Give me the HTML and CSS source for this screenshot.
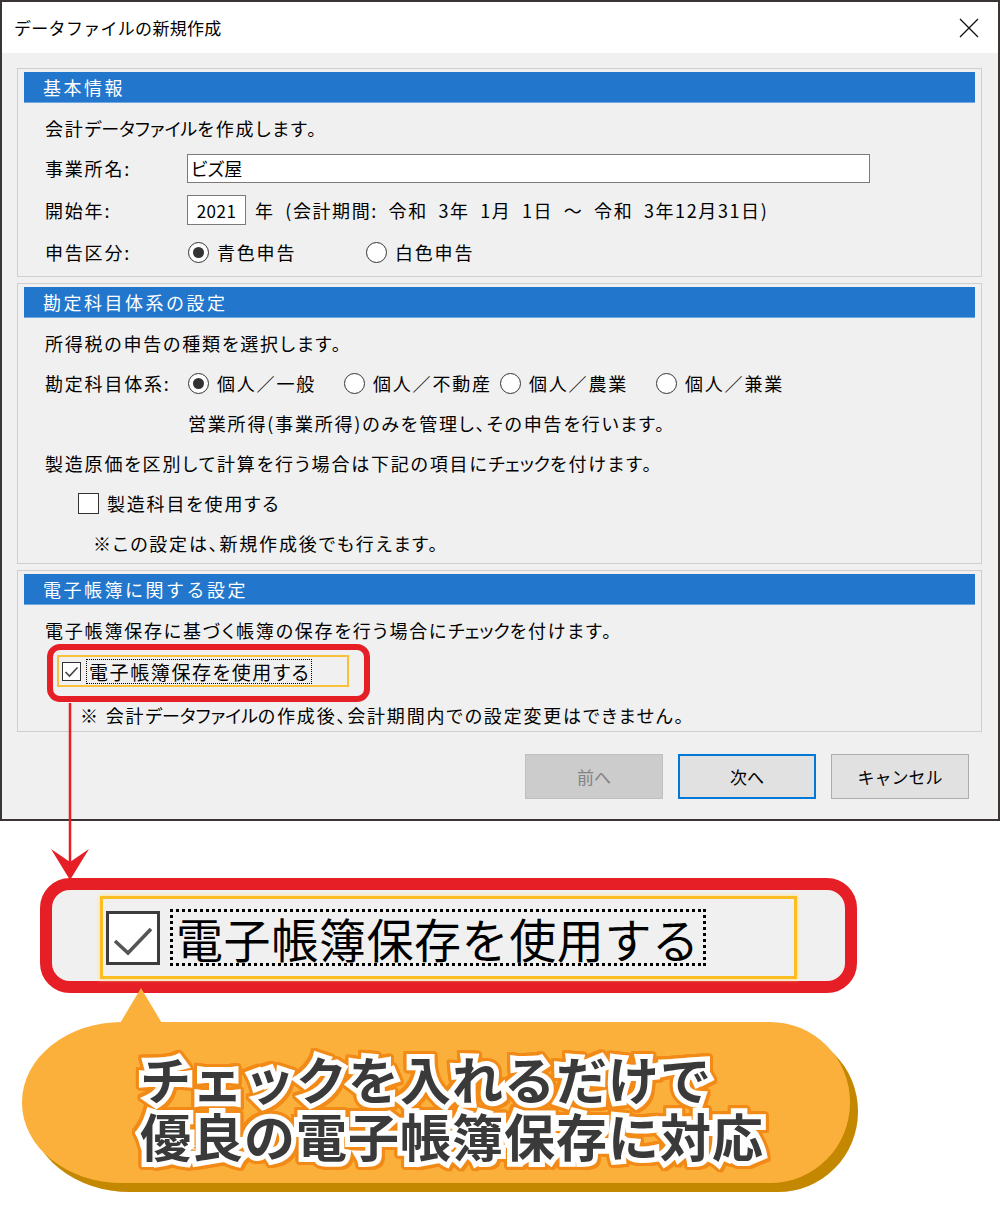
FILE: index.html
```html
<!DOCTYPE html>
<html lang="ja">
<head>
    <meta charset="UTF-8">
    <meta name="viewport" content="width=device-width, initial-scale=1.0">
    <title>データファイルの新規作成</title>
    <link rel="stylesheet" href="styles.css">
</head>

<body>
    <div class="window">
        <div class="titlebar">
            <span class="title">データファイルの新規作成</span>
            <svg class="close" width="20" height="20" viewBox="0 0 20 20">
                <path d="M1 1 L19 19 M19 1 L1 19" stroke="#111" stroke-width="1.3" fill="none" />
            </svg>
        </div>

        <div class="content">
            <!-- 基本情報 -->
            <section class="group">
                <h2 class="group-head">基本情報</h2>
                <div class="group-body basic">
                    <div class="row">会計<span class="kt">データファイル</span>を作成します。</div>
                    <div class="row">
                        <span class="label">事業所名:</span>
                        <div class="field field-name">ビズ屋</div>
                    </div>
                    <div class="row row-tall">
                        <span class="label">開始年:</span>
                        <div class="field field-year">2021</div>
                        <span class="period">年 (会計期間: 令和 3年 1月 1日 ～ 令和 3年12月31日)</span>
                    </div>
                    <div class="row">
                        <span class="label">申告区分:</span>
                        <span class="option option-wide"><span class="radio checked"></span>青色申告</span>
                        <span class="option"><span class="radio"></span>白色申告</span>
                    </div>
                </div>
            </section>

            <!-- 勘定科目体系の設定 -->
            <section class="group">
                <h2 class="group-head">勘定科目体系の設定</h2>
                <div class="group-body accounts">
                    <div class="row">所得税の申告の種類を選択します。</div>
                    <div class="row">
                        <span class="label">勘定科目体系:</span>
                        <span class="option"><span class="radio checked"></span>個人／一般</span>
                        <span class="option"><span class="radio"></span>個人／不動産</span>
                        <span class="option"><span class="radio"></span>個人／農業</span>
                        <span class="option"><span class="radio"></span>個人／兼業</span>
                    </div>
                    <div class="row hint">営業所得(事業所得)のみを管理し、その申告を行います。</div>
                    <div class="row">製造原価を区別して計算を行う場合は下記の項目に<span class="kt">チェック</span>を付けます。</div>
                    <div class="row check-row"><span class="checkbox"></span>製造科目を使用する</div>
                    <div class="row note-indent">※この設定は、新規作成後でも行えます。</div>
                </div>
            </section>

            <!-- 電子帳簿に関する設定 -->
            <section class="group">
                <h2 class="group-head">電子帳簿に関する設定</h2>
                <div class="group-body ledger">
                    <div class="row lead">電子帳簿保存に基づく帳簿の保存を行う場合に<span class="kt">チェック</span>を付けます。</div>
                    <div class="row mark-row">
                        <div class="mark">
                            <div class="mark-inner">
                                <span class="checkbox">
                                    <svg width="17" height="17" viewBox="0 0 17 17">
                                        <path d="M2.5 9 L6.5 13 L14.5 4.5" stroke="#444" stroke-width="1.6" fill="none" />
                                    </svg>
                                </span>
                                <span class="focus-text">電子帳簿保存を使用する</span>
                            </div>
                        </div>
                    </div>
                    <div class="row note-row">※ 会計<span class="kt">データファイル</span>の作成後、会計期間内での設定変更はできません。</div>
                </div>
            </section>

            <div class="actions">
                <button type="button" class="btn btn-disabled">前へ</button>
                <button type="button" class="btn btn-default">次へ</button>
                <button type="button" class="btn">キャンセル</button>
            </div>
        </div>
    </div>

    <!-- connector from the small frame to the enlarged view -->
    <svg class="connector" width="50" height="180" viewBox="0 0 50 180">
        <line x1="25" y1="0" x2="25" y2="165" stroke="#e61f27" stroke-width="2.5" />
        <polygon points="6,146 25,177 44,146 25,159" fill="#e61f27" />
    </svg>

    <div class="zoom-box">
        <div class="zoom-inner">
            <span class="big-check">
                <svg width="48" height="48" viewBox="0 0 48 48">
                    <path d="M6 27 L19 39 L42 15" stroke="#555" stroke-width="3.6" fill="none" />
                </svg>
            </span>
            <span class="big-text">電子帳簿保存を使用する</span>
        </div>
    </div>

    <div class="bubble">
        <p class="bubble-text">チェックを入れるだけで<br>優良の電子帳簿保存に対応</p>
    </div>
</body>
</html>
```

FILE: styles.css
```css
body {
    margin: 0;
    position: relative;
    width: 1000px;
    height: 1209px;
    background-color: #fff;
    font-family: "Noto Sans CJK JP", "Noto Sans", sans-serif;
    color: #000;
}

.window {
    box-sizing: border-box;
    width: 1000px;
    height: 821px;
    border: 2px solid #3b3434;
    background-color: #f0f0f0;
}

.titlebar {
    height: 51px;
    background-color: #fff;
    display: flex;
    align-items: center;
    justify-content: space-between;
    padding: 0 19px 0 12px;
}

.title {
    font-size: 17px;
    letter-spacing: 0.3px;
}

.content {
    padding: 15px 16px 0 15px;
}

.group {
    border: 1px solid #cfcfcf;
    padding: 3px 6px 0;
}

.group + .group {
    margin-top: 6px;
}

.group-head {
    margin: 0;
    height: 31px;
    background-color: #2277cc;
    border-bottom: 1px solid #6fa8e0;
    box-sizing: border-box;
    color: #fff;
    font-size: 18px;
    font-weight: 400;
    line-height: 30px;
    letter-spacing: 2.5px;
    padding-left: 19px;
}

.group-body {
    padding: 5px 0 4px 21px;
    font-size: 18px;
    letter-spacing: 1.8px;
    font-feature-settings: "palt";
}

.group-body.accounts {
    padding-bottom: 0;
}

.group-body.ledger {
    padding-top: 10px;
}

.kt {
    letter-spacing: 0;
}

.row {
    height: 40px;
    display: flex;
    align-items: center;
    white-space: nowrap;
}

.row-tall {
    height: 44px;
}

.label {
    width: 142px;
}

.field {
    box-sizing: border-box;
    height: 30px;
    background-color: #fff;
    border: 1px solid #7a7a7a;
    display: flex;
    align-items: center;
    padding-left: 3px;
}

.field-name {
    width: 683px;
    height: 29px;
    letter-spacing: 0;
}

.field-year {
    width: 59px;
    justify-content: center;
    padding-left: 0;
    font-size: 17px;
    letter-spacing: 0.5px;
}

.period {
    margin-left: 9px;
    letter-spacing: 1.6px;
    word-spacing: 5px;
}

.option {
    display: flex;
    align-items: center;
    width: 156px;
}

.option-wide {
    width: 178px;
}

.radio {
    box-sizing: border-box;
    flex: none;
    width: 21px;
    height: 21px;
    margin: 0 8px 0 1px;
    border: 1.5px solid #333;
    border-radius: 50%;
    background-color: #fff;
    display: flex;
    align-items: center;
    justify-content: center;
}

.radio.checked::after {
    content: "";
    width: 11px;
    height: 11px;
    border-radius: 50%;
    background-color: #333;
}

.hint {
    padding-left: 143px;
}

.checkbox {
    box-sizing: border-box;
    width: 21px;
    height: 21px;
    border: 1px solid #333;
    background-color: #fff;
    display: flex;
}

.check-row .checkbox {
    margin: 0 8px 0 33px;
}

.note-indent {
    padding-left: 48px;
}

.lead {
    height: 29px;
}

.mark-row {
    height: 58px;
    align-items: flex-start;
}

.mark {
    box-sizing: border-box;
    width: 323px;
    height: 58px;
    margin-left: 2px;
    border: 6px solid #e61f27;
    border-radius: 13px;
    padding: 5px 0 0 4px;
}

.mark-inner {
    box-sizing: border-box;
    width: 292px;
    height: 32px;
    border: 2px solid #f9c13a;
    display: flex;
    align-items: center;
    padding-left: 3px;
}

.mark-inner .checkbox {
    width: 19px;
    height: 19px;
}

.focus-text {
    margin-left: 5px;
    border: 1px dotted #000;
    padding: 0 1px 0 2px;
    font-size: 19px;
    letter-spacing: 1.6px;
    line-height: 23px;
}

.note-row {
    height: 25px;
    padding-left: 35px;
}

.actions {
    display: flex;
    justify-content: flex-end;
    gap: 15px;
    margin-top: 22px;
    padding-right: 13px;
}

.btn {
    box-sizing: border-box;
    width: 138px;
    height: 45px;
    border: 1px solid #adadad;
    background-color: #e1e1e1;
    font-family: inherit;
    font-size: 17px;
    color: #000;
    padding: 0;
}

.btn-disabled {
    background-color: #cccccc;
    border-color: #bfbfbf;
    color: #838383;
}

.btn-default {
    border: 2px solid #0078d7;
}

.connector {
    position: absolute;
    left: 45px;
    top: 703px;
    pointer-events: none;
}

.zoom-box {
    box-sizing: border-box;
    width: 817px;
    height: 115px;
    margin: 57px 0 0 40px;
    border: 12px solid #e61f27;
    border-radius: 30px;
    background-color: #f0f0f0;
    padding: 6px 0 0 48px;
}

.zoom-inner {
    box-sizing: border-box;
    width: 697px;
    height: 83px;
    border: 3px solid #fbbd21;
    box-shadow: 0 0 3px 1px #fde49c;
    display: flex;
    align-items: center;
    padding-left: 3px;
}

.big-check {
    box-sizing: border-box;
    width: 54px;
    height: 54px;
    border: 3px solid #3c3c3c;
    background-color: #fff;
    display: flex;
}

.big-text {
    box-sizing: border-box;
    height: 57px;
    margin-left: 10px;
    padding: 0 6px 0 6px;
    font-size: 47px;
    font-weight: 400;
    line-height: 57px;
    letter-spacing: 0.6px;
    background:
        linear-gradient(90deg, #000 50%, transparent 50%) top left / 6px 3px repeat-x,
        linear-gradient(90deg, #000 50%, transparent 50%) bottom left / 6px 3px repeat-x,
        linear-gradient(#000 50%, transparent 50%) top left / 3px 6px repeat-y,
        linear-gradient(#000 50%, transparent 50%) top right / 3px 6px repeat-y;
}

.bubble {
    position: relative;
    box-sizing: border-box;
    width: 828px;
    height: 161px;
    margin: 29px 0 0 22px;
    background-color: #fbb03b;
    border-radius: 100px 80px 80px 100px / 80px;
    box-shadow: 8px 9px 0 #c48700;
}

.bubble::before {
    content: "";
    position: absolute;
    left: 94px;
    top: -34px;
    border-left: 25px solid transparent;
    border-right: 25px solid transparent;
    border-bottom: 42px solid #fbb03b;
}

.bubble-text {
    position: relative;
    margin: 0;
    padding: 28px 0 0 118px;
    font-size: 51px;
    font-weight: 700;
    line-height: 57px;
    letter-spacing: 1px;
    color: #3a3a3a;
    -webkit-text-stroke: 10px #fff;
    paint-order: stroke fill;
    filter:
        drop-shadow(2px 0 0 #f28a17)
        drop-shadow(-2px 0 0 #f28a17)
        drop-shadow(0 2px 0 #f28a17)
        drop-shadow(0 -2px 0 #f28a17)
        drop-shadow(1px 1px 0 #f28a17)
        drop-shadow(-1px -1px 0 #f28a17);
}
```
